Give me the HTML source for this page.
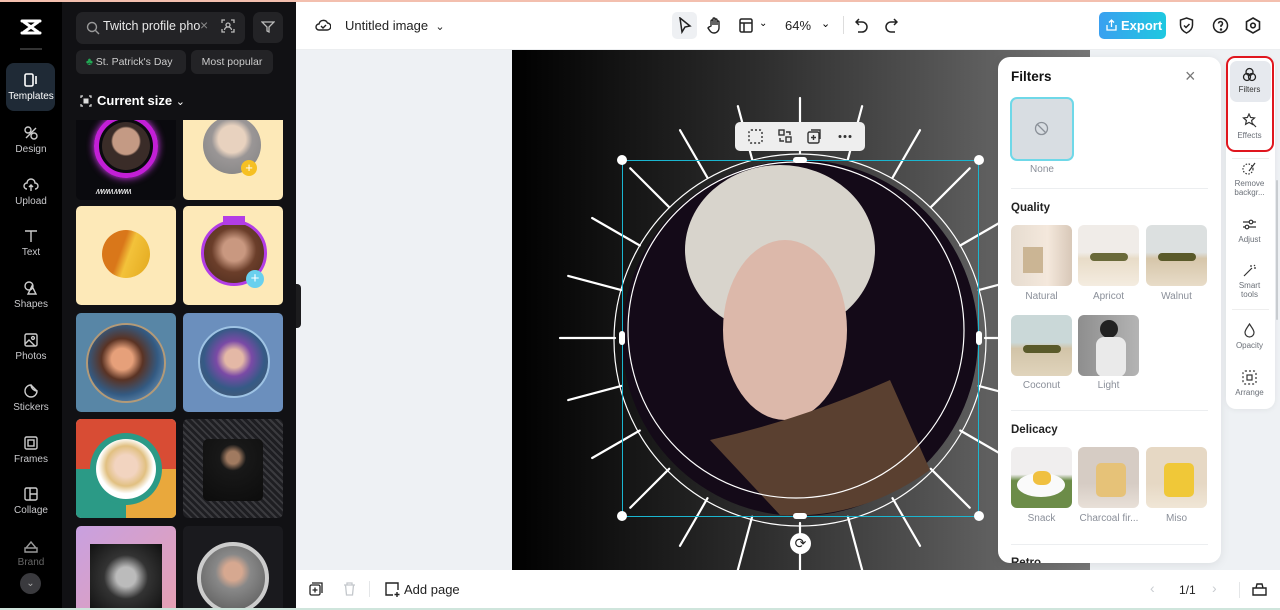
<!DOCTYPE html>
<html><head><meta charset="utf-8"><style>
*{box-sizing:border-box;margin:0;padding:0}
html,body{width:1280px;height:610px;overflow:hidden}
body{font-family:"Liberation Sans",sans-serif;background:#eef1f4;position:relative}
.abs{position:absolute}
.nav{left:0;top:2px;width:62px;height:608px;background:#000}
.nav .it{position:absolute;left:6px;width:50px;text-align:center;color:#c9c9cc;font-size:10px}
.nav .it svg{display:block;margin:0 auto 3px}
.panel{left:62px;top:2px;width:234px;height:608px;background:#111114;overflow:hidden}
.card{position:absolute;width:100px;height:99px;border-radius:5px;overflow:hidden}
.lbl{font-size:10px;color:#8a8f99;text-align:center}
.th{position:absolute;width:61px;height:61px;border-radius:6px;overflow:hidden}
.rt{position:absolute;left:0;width:47px;text-align:center;font-size:8px;color:#6b7078;line-height:9px}
.rt svg{display:block;margin:0 auto 3px}
</style></head><body>
<div class="abs" style="left:0;top:0;width:1280px;height:2px;background:#f3bfae"></div>
<!-- nav -->
<div class="abs nav">
 <svg class="abs" style="left:19px;top:16px" width="24" height="18" viewBox="0 0 24 18"><path d="M3 3h18M3 15h18M5 4l14 10M19 4L5 14" stroke="#fff" stroke-width="3" fill="none" stroke-linecap="round"/></svg>
 <div class="abs" style="left:20px;top:46px;width:22px;height:2px;background:#333"></div>
 <div class="abs" style="left:6px;top:61px;width:49px;height:48px;border-radius:8px;background:#1f2a36"></div>
 <div class="it" style="top:70px;color:#fff"><svg width="16" height="16" viewBox="0 0 16 16" fill="none" stroke="#fff" stroke-width="1.6"><rect x="2" y="2" width="8" height="12" rx="1.5"/><path d="M13 4v8"/></svg>Templates</div>
 <div class="it" style="top:123px"><svg width="16" height="16" viewBox="0 0 16 16" fill="none" stroke="#ccc" stroke-width="1.4"><circle cx="5" cy="5" r="3"/><circle cx="11" cy="11" r="3"/><path d="M3 13L13 3"/></svg>Design</div>
 <div class="it" style="top:175px"><svg width="16" height="16" viewBox="0 0 16 16" fill="none" stroke="#ccc" stroke-width="1.4"><path d="M4 12a3 3 0 0 1 0-6 4 4 0 0 1 8 0 3 3 0 0 1 0 6M8 8v6M6 10l2-2 2 2"/></svg>Upload</div>
 <div class="it" style="top:226px"><svg width="16" height="16" viewBox="0 0 16 16" fill="none" stroke="#ccc" stroke-width="1.4"><path d="M2 3h12M8 3v11"/></svg>Text</div>
 <div class="it" style="top:278px"><svg width="16" height="16" viewBox="0 0 16 16" fill="none" stroke="#ccc" stroke-width="1.4"><circle cx="6" cy="6" r="4"/><path d="M9 6l4 8H5z"/></svg>Shapes</div>
 <div class="it" style="top:330px"><svg width="16" height="16" viewBox="0 0 16 16" fill="none" stroke="#ccc" stroke-width="1.4"><rect x="2" y="2" width="12" height="12" rx="1.5"/><path d="M2 12l4-4 6 6"/><circle cx="10" cy="6" r="1.4"/></svg>Photos</div>
 <div class="it" style="top:381px"><svg width="16" height="16" viewBox="0 0 16 16" fill="none" stroke="#ccc" stroke-width="1.4"><path d="M14 8A6 6 0 1 1 8 2c0 3 3 6 6 6zM8 2l6 6"/></svg>Stickers</div>
 <div class="it" style="top:433px"><svg width="16" height="16" viewBox="0 0 16 16" fill="none" stroke="#ccc" stroke-width="1.4"><rect x="2" y="2" width="12" height="12" rx="1.5"/><rect x="5" y="5" width="6" height="6"/></svg>Frames</div>
 <div class="it" style="top:484px"><svg width="16" height="16" viewBox="0 0 16 16" fill="none" stroke="#ccc" stroke-width="1.4"><rect x="2" y="2" width="12" height="12" rx="1.5"/><path d="M7 2v12M7 8h7"/></svg>Collage</div>
 <div class="it" style="top:536px;color:#666"><svg width="16" height="16" viewBox="0 0 16 16" fill="none" stroke="#999" stroke-width="1.4"><path d="M2 10h12v4H2zM3 10l5-6 5 6"/></svg>Brand</div>
 <div class="abs" style="left:20px;top:571px;width:21px;height:21px;border-radius:50%;background:#3a3a3e;color:#aaa;font-size:10px;text-align:center;line-height:21px">⌄</div>
</div>
<!-- panel -->
<div class="abs panel">
 <div class="abs" style="left:14px;top:10px;width:169px;height:32px;border-radius:7px;background:#232326"></div>
 <svg class="abs" style="left:24px;top:19px" width="14" height="14" viewBox="0 0 14 14" fill="none" stroke="#999" stroke-width="1.4"><circle cx="6" cy="6" r="4.5"/><path d="M9.5 9.5L13 13"/></svg>
 <div class="abs" style="left:41px;top:17px;color:#e8e8e8;font-size:12.5px">Twitch profile pho</div>
 <div class="abs" style="left:138px;top:15px;color:#888;font-size:14px">×</div>
 <svg class="abs" style="left:159px;top:17px" width="14" height="14" viewBox="0 0 14 14" fill="none" stroke="#bbb" stroke-width="1.3"><path d="M1 4V1h3M10 1h3v3M13 10v3h-3M4 13H1v-3"/><circle cx="7" cy="6" r="2"/><path d="M3.5 11a3.5 3 0 0 1 7 0"/></svg>
 <div class="abs" style="left:191px;top:10px;width:30px;height:31px;border-radius:7px;background:#232326"></div>
 <svg class="abs" style="left:199px;top:18px" width="14" height="14" viewBox="0 0 14 14" fill="none" stroke="#bbb" stroke-width="1.3"><path d="M1 2h12L8 7v5l-2-1V7z"/></svg>
 <div class="abs" style="left:14px;top:48px;width:110px;height:24px;border-radius:6px;background:#232326;color:#ccc;font-size:10.5px;line-height:24px;padding-left:10px"><span style="color:#22a854">♣</span> St. Patrick's Day</div>
 <div class="abs" style="left:129px;top:48px;width:82px;height:24px;border-radius:6px;background:#232326;color:#ccc;font-size:10.5px;line-height:24px;text-align:center">Most popular</div>
 <svg class="abs" style="left:18px;top:93px" width="12" height="12" viewBox="0 0 12 12" fill="none" stroke="#ddd" stroke-width="1.2"><path d="M1 3V1h2M9 1h2v2M11 9v2H9M3 11H1V9"/><rect x="3.5" y="3.5" width="5" height="5" fill="#ddd" stroke="none"/></svg>
 <div class="abs" style="left:35px;top:91px;color:#fff;font-size:13px;font-weight:bold">Current size <span style="font-weight:normal;font-size:11px">⌄</span></div>
 <div class="card" style="left:14px;top:118px;height:80px;background:#0a0a0e;border-radius:0 0 5px 5px">
  <div class="abs" style="left:18px;top:-6px;width:64px;height:64px;border-radius:50%;border:5px solid #c21fd6;box-shadow:0 0 8px #e040ff"></div>
  <div class="abs" style="left:26px;top:2px;width:48px;height:48px;border-radius:50%;background:radial-gradient(circle at 50% 40%,#c49a84 0 35%,#3a2c28 40%)"></div>
  <div class="abs" style="left:20px;top:66px;color:#fff;font-size:9px;font-style:italic;letter-spacing:-1px">ʍʍʍ ʍʍʍ</div>
 </div>
 <div class="card" style="left:121px;top:118px;height:80px;background:#fde9b8;border-radius:0 0 5px 5px">
  <div class="abs" style="left:20px;top:-4px;width:58px;height:58px;border-radius:50%;background:radial-gradient(circle at 50% 40%,#e8d2bf 0 30%,#9a9696 45%,#808080)"></div>
  <div class="abs" style="left:58px;top:40px;width:16px;height:16px;border-radius:50%;background:#f6c023;color:#fff;font-size:13px;line-height:15px;text-align:center">+</div>
 </div>
 <div class="card" style="left:14px;top:204px;background:#fde9b8">
  <div class="abs" style="left:26px;top:24px;width:48px;height:48px;border-radius:50%;background:linear-gradient(110deg,#d9771a 0 40%,#f3c23a 55%,#e2a81d)"></div>
 </div>
 <div class="card" style="left:121px;top:204px;background:#fde9b8">
  <div class="abs" style="left:18px;top:14px;width:66px;height:66px;border-radius:50%;border:3px solid #b33de6;background:radial-gradient(circle at 50% 45%,#c99880 0 25%,#6b3e2a 50%,#4a2a1c)"></div>
  <div class="abs" style="left:40px;top:10px;width:22px;height:9px;background:#b33de6"></div>
  <div class="abs" style="left:63px;top:64px;width:18px;height:18px;border-radius:50%;background:#69d0ee;color:#fff;font-size:15px;line-height:17px;text-align:center">+</div>
 </div>
 <div class="card" style="left:14px;top:311px;background:#5886a6">
  <div class="abs" style="left:10px;top:10px;width:80px;height:80px;border-radius:50%;border:2px solid #b39a78;background:radial-gradient(circle at 45% 45%,#e6a07a 0 18%,#5a3324 35%,#335a82 60%,#8cb6d8)"></div>
 </div>
 <div class="card" style="left:121px;top:311px;background:#6b8fbd">
  <div class="abs" style="left:15px;top:13px;width:72px;height:72px;border-radius:50%;border:2px solid #9ec3e4;background:radial-gradient(circle at 50% 45%,#e4b8a6 0 18%,#7a4aa6 35%,#355a86 60%,#505a66)"></div>
 </div>
 <div class="card" style="left:14px;top:417px;background:#f2e2c4">
  <div class="abs" style="left:0;top:0;width:100px;height:100px;background:conic-gradient(#d84c34 0 25%,#e9a83c 0 50%,#2b9a86 0 75%,#d84c34 0)"></div>
  <div class="abs" style="left:14px;top:14px;width:72px;height:72px;border-radius:50%;background:#2b9a86"></div>
  <div class="abs" style="left:20px;top:20px;width:60px;height:60px;border-radius:50%;background:radial-gradient(circle at 50% 45%,#f2d4c0 0 25%,#e1c081 45%,#fff 62%)"></div>
 </div>
 <div class="card" style="left:121px;top:417px;background:repeating-linear-gradient(45deg,#3a3a3e 0 2px,#1e1e22 2px 5px)">
  <div class="abs" style="left:20px;top:20px;width:60px;height:62px;border-radius:5px;background:radial-gradient(circle at 50% 30%,#a07a60 0 12%,#181818 25%,#0c0c0c)"></div>
 </div>
 <div class="card" style="left:14px;top:524px;background:linear-gradient(135deg,#c8a0e0,#e8a0b0)">
  <div class="abs" style="left:14px;top:18px;width:72px;height:66px;background:radial-gradient(circle at 50% 50%,#bbb 0 20%,#333 45%,#111)"></div>
 </div>
 <div class="card" style="left:121px;top:524px;background:#1a1a1e">
  <div class="abs" style="left:14px;top:16px;width:72px;height:72px;border-radius:50%;border:4px solid #ccc;background:radial-gradient(circle at 50% 40%,#d6a890 0 18%,#888 35%,#555)"></div>
 </div>
</div>
<div class="abs" style="left:296px;top:284px;width:5px;height:44px;background:#1c1c1e;border-radius:0 4px 4px 0"></div>
<!-- top bar -->
<div class="abs" style="left:296px;top:2px;width:984px;height:48px;background:#fff;border-bottom:1px solid #eceef0"></div>
<svg class="abs" style="left:315px;top:18px" width="16" height="14" viewBox="0 0 16 14" fill="none" stroke="#222" stroke-width="1.4"><path d="M4 12a3 3 0 0 1 0-6 4.5 4.5 0 0 1 8.5-1A3.5 3.5 0 0 1 12 12z"/><path d="M6 8l2 2 3-3"/></svg>
<div class="abs" style="left:345px;top:18px;font-size:13px;color:#222">Untitled image &nbsp;<span style="font-size:11px">⌄</span></div>
<div class="abs" style="left:672px;top:12px;width:25px;height:27px;border-radius:5px;background:#eef0f3"></div>
<svg class="abs" style="left:678px;top:17px" width="14" height="17" viewBox="0 0 14 17" fill="none" stroke="#222" stroke-width="1.5"><path d="M2 1l10 8-5 1-3 5z"/></svg>
<svg class="abs" style="left:707px;top:17px" width="16" height="17" viewBox="0 0 16 17" fill="none" stroke="#222" stroke-width="1.4"><path d="M4 9V4a1 1 0 0 1 2 0v4V2a1 1 0 0 1 2 0v6V3a1 1 0 0 1 2 0v5V5a1 1 0 0 1 2 0v6a5 5 0 0 1-5 5c-3 0-4-2-6-5l1-1z"/></svg>
<svg class="abs" style="left:739px;top:18px" width="14" height="15" viewBox="0 0 14 15" fill="none" stroke="#222" stroke-width="1.5"><rect x="1" y="1" width="12" height="13" rx="1.5"/><path d="M1 5h12M5 5v9"/></svg>
<div class="abs" style="left:759px;top:18px;font-size:10px">⌄</div>
<div class="abs" style="left:785px;top:18px;font-size:13px;color:#222">64%</div>
<div class="abs" style="left:821px;top:17px;font-size:11px">⌄</div>
<div class="abs" style="left:843px;top:16px;width:1px;height:18px;background:#ddd"></div>
<svg class="abs" style="left:855px;top:18px" width="13" height="15" viewBox="0 0 13 15" fill="none" stroke="#222" stroke-width="1.5"><path d="M4 1L1 4l3 3M1 4h6a5 5 0 0 1 0 10H3"/></svg>
<svg class="abs" style="left:885px;top:18px" width="13" height="15" viewBox="0 0 13 15" fill="none" stroke="#222" stroke-width="1.5"><path d="M9 1l3 3-3 3M12 4H6a5 5 0 0 0 0 10h4"/></svg>
<div class="abs" style="left:1099px;top:12px;width:67px;height:27px;border-radius:5px;background:linear-gradient(90deg,#3aa0f0,#1ec8e0);color:#fff;font-size:13px;font-weight:bold;line-height:27px;padding-left:22px">Export</div>
<svg class="abs" style="left:1106px;top:19px" width="11" height="12" viewBox="0 0 11 12" fill="none" stroke="#fff" stroke-width="1.3"><path d="M5.5 1v7M3 3.5l2.5-2.5 2.5 2.5M1 6v5h9V6"/></svg>
<svg class="abs" style="left:1179px;top:17px" width="15" height="17" viewBox="0 0 15 17" fill="none" stroke="#222" stroke-width="1.5"><path d="M7.5 1l6 2v5c0 4-3 6.5-6 8-3-1.5-6-4-6-8V3z"/><path d="M5 8.5l2 2 3.5-3.5"/></svg>
<svg class="abs" style="left:1212px;top:17px" width="17" height="17" viewBox="0 0 17 17" fill="none" stroke="#222" stroke-width="1.5"><circle cx="8.5" cy="8.5" r="7"/><path d="M6.5 6.5a2 2 0 1 1 2.5 2v1.5"/><circle cx="9" cy="12.5" r=".5" fill="#222"/></svg>
<svg class="abs" style="left:1245px;top:17px" width="16" height="17" viewBox="0 0 16 17" fill="none" stroke="#222" stroke-width="1.6"><path d="M8 1l6.5 3.75v7.5L8 16 1.5 12.25v-7.5z"/><circle cx="8" cy="8.5" r="2.3"/></svg>
<!-- canvas -->
<div class="abs" style="left:512px;top:50px;width:578px;height:520px;background:linear-gradient(90deg,#000 0%,#2a2a2a 40%,#555 75%,#777);overflow:hidden">
<svg width="578" height="520" viewBox="512 50 578 520">
 <g stroke="#fff" stroke-width="2.2" stroke-linecap="round">
  <g transform="translate(800,338)">
   <line x1="0" y1="-185" x2="0" y2="-240" transform="rotate(0)"/><line x1="0" y1="-185" x2="0" y2="-240" transform="rotate(15)"/><line x1="0" y1="-185" x2="0" y2="-240" transform="rotate(30)"/><line x1="0" y1="-185" x2="0" y2="-240" transform="rotate(45)"/><line x1="0" y1="-185" x2="0" y2="-240" transform="rotate(60)"/><line x1="0" y1="-185" x2="0" y2="-240" transform="rotate(75)"/><line x1="0" y1="-185" x2="0" y2="-240" transform="rotate(90)"/><line x1="0" y1="-185" x2="0" y2="-240" transform="rotate(105)"/><line x1="0" y1="-185" x2="0" y2="-240" transform="rotate(120)"/><line x1="0" y1="-185" x2="0" y2="-240" transform="rotate(135)"/><line x1="0" y1="-185" x2="0" y2="-240" transform="rotate(150)"/><line x1="0" y1="-185" x2="0" y2="-240" transform="rotate(165)"/><line x1="0" y1="-185" x2="0" y2="-240" transform="rotate(180)"/><line x1="0" y1="-185" x2="0" y2="-240" transform="rotate(195)"/><line x1="0" y1="-185" x2="0" y2="-240" transform="rotate(210)"/><line x1="0" y1="-185" x2="0" y2="-240" transform="rotate(225)"/><line x1="0" y1="-185" x2="0" y2="-240" transform="rotate(240)"/><line x1="0" y1="-185" x2="0" y2="-240" transform="rotate(255)"/><line x1="0" y1="-185" x2="0" y2="-240" transform="rotate(270)"/><line x1="0" y1="-185" x2="0" y2="-240" transform="rotate(285)"/><line x1="0" y1="-185" x2="0" y2="-240" transform="rotate(300)"/><line x1="0" y1="-185" x2="0" y2="-240" transform="rotate(315)"/><line x1="0" y1="-185" x2="0" y2="-240" transform="rotate(330)"/><line x1="0" y1="-185" x2="0" y2="-240" transform="rotate(345)"/>
  </g>
 </g>
 <circle cx="800" cy="338" r="178" fill="#140a18"/>
 <ellipse cx="780" cy="250" rx="95" ry="85" fill="#d8d4cc"/>
 <ellipse cx="785" cy="330" rx="62" ry="90" fill="#dcb8aa"/>
 <path d="M710 440 Q800 420 890 380 L930 470 Q860 520 780 515z" fill="#5a4030"/>
 <circle cx="796" cy="330" r="168" fill="none" stroke="#fff" stroke-width="1.2"/>
 <circle cx="800" cy="340" r="186" fill="none" stroke="#fff" stroke-width="1.2"/>
</svg>
</div>
<!-- selection -->
<div class="abs" style="left:622px;top:160px;width:357px;height:357px;border:1.5px solid #1ab6d0"></div>
<div class="abs" style="left:617px;top:155px;width:10px;height:10px;border-radius:50%;background:#fff"></div>
<div class="abs" style="left:974px;top:155px;width:10px;height:10px;border-radius:50%;background:#fff"></div>
<div class="abs" style="left:617px;top:511px;width:10px;height:10px;border-radius:50%;background:#fff"></div>
<div class="abs" style="left:974px;top:511px;width:10px;height:10px;border-radius:50%;background:#fff"></div>
<div class="abs" style="left:793px;top:157px;width:14px;height:6px;border-radius:3px;background:#fff"></div>
<div class="abs" style="left:793px;top:513px;width:14px;height:6px;border-radius:3px;background:#fff"></div>
<div class="abs" style="left:619px;top:331px;width:6px;height:14px;border-radius:3px;background:#fff"></div>
<div class="abs" style="left:976px;top:331px;width:6px;height:14px;border-radius:3px;background:#fff"></div>
<div class="abs" style="left:790px;top:533px;width:21px;height:21px;border-radius:50%;background:#fff;color:#222;font-size:14px;line-height:21px;text-align:center">⟳</div>
<div class="abs" style="left:735px;top:122px;width:130px;height:29px;border-radius:5px;background:#eeeeee"></div>
<svg class="abs" style="left:748px;top:129px" width="110" height="15" viewBox="0 0 110 15" fill="none" stroke="#333" stroke-width="1.4"><rect x="1" y="1" width="13" height="13" rx="2" stroke-dasharray="2 2"/><rect x="31" y="1" width="5" height="5"/><rect x="38" y="8" width="5" height="5"/><path d="M38 3h4v3M36 12h-4V9"/><rect x="60" y="3" width="11" height="11" rx="1.5"/><path d="M63 1h9v9M65.5 6v5M63 8.5h5"/><circle cx="92" cy="7.5" r=".8" fill="#333"/><circle cx="97" cy="7.5" r=".8" fill="#333"/><circle cx="102" cy="7.5" r=".8" fill="#333"/></svg>
<!-- filters panel -->
<div class="abs" style="left:998px;top:57px;width:223px;height:506px;border-radius:12px;background:#fff;box-shadow:0 2px 10px rgba(0,0,0,.08);overflow:hidden">
 <div class="abs" style="left:13px;top:12px;font-size:13.5px;font-weight:bold;color:#111">Filters</div>
 <div class="abs" style="left:187px;top:9px;font-size:18px;color:#777">×</div>
 <div class="abs" style="left:12px;top:40px;width:64px;height:64px;border-radius:7px;border:2px solid #6fd8e8;background:#d8dde2"></div>
 <svg class="abs" style="left:36px;top:64px" width="15" height="15" viewBox="0 0 15 15" fill="none" stroke="#8a9098" stroke-width="1.3"><circle cx="7.5" cy="7.5" r="6"/><path d="M3.5 3.5l8 8"/></svg>
 <div class="abs lbl" style="left:12px;top:107px;width:64px">None</div>
 <div class="abs" style="left:13px;top:131px;width:197px;height:1px;background:#eceef0"></div>
 <div class="abs" style="left:13px;top:145px;font-size:11.5px;color:#222;font-weight:bold">Quality</div>
 <div class="th" style="left:13px;top:168px;background:linear-gradient(90deg,#e6dcd0,#f4e8dc 60%,#d8c8b8)"><div class="abs" style="left:12px;top:22px;width:20px;height:26px;background:#cbb594"></div></div>
 <div class="th" style="left:80px;top:168px;background:linear-gradient(#f0ece8 45%,#e8dcc8 55%,#f4ece0)"><div class="abs" style="left:12px;top:28px;width:38px;height:8px;background:#6a6a3a;border-radius:4px"></div></div>
 <div class="th" style="left:148px;top:168px;background:linear-gradient(#dce0e0 45%,#d6c6aa 55%,#e8dcc8)"><div class="abs" style="left:12px;top:28px;width:38px;height:8px;background:#5a5a2a;border-radius:4px"></div></div>
 <div class="abs lbl" style="left:13px;top:234px;width:61px">Natural</div>
 <div class="abs lbl" style="left:80px;top:234px;width:61px">Apricot</div>
 <div class="abs lbl" style="left:148px;top:234px;width:61px">Walnut</div>
 <div class="th" style="left:13px;top:258px;background:linear-gradient(#cad8d8 45%,#d2c4a8 55%,#e0d4bc)"><div class="abs" style="left:12px;top:30px;width:38px;height:8px;background:#5a5a2a;border-radius:4px"></div></div>
 <div class="th" style="left:80px;top:258px;background:linear-gradient(90deg,#8e8e8e,#b4b4b4)"><div class="abs" style="left:22px;top:5px;width:18px;height:18px;border-radius:50%;background:#222"></div><div class="abs" style="left:18px;top:22px;width:30px;height:40px;border-radius:8px;background:#eaeaea"></div></div>
 <div class="abs lbl" style="left:13px;top:323px;width:61px">Coconut</div>
 <div class="abs lbl" style="left:80px;top:323px;width:61px">Light</div>
 <div class="abs" style="left:13px;top:353px;width:197px;height:1px;background:#eceef0"></div>
 <div class="abs" style="left:13px;top:367px;font-size:11.5px;color:#222;font-weight:bold">Delicacy</div>
 <div class="th" style="left:13px;top:390px;background:linear-gradient(#f0eeee 45%,#6c8c48 55%)"><div class="abs" style="left:6px;top:26px;width:48px;height:24px;border-radius:50%;background:#fafafa"></div><div class="abs" style="left:22px;top:24px;width:18px;height:14px;border-radius:40%;background:#f0c040"></div></div>
 <div class="th" style="left:80px;top:390px;background:linear-gradient(#d6ccc4 60%,#e8e0d8)"><div class="abs" style="left:18px;top:16px;width:30px;height:34px;border-radius:5px;background:#e6c278"></div></div>
 <div class="th" style="left:148px;top:390px;background:linear-gradient(#e6d8c4 60%,#f0e6d6)"><div class="abs" style="left:18px;top:16px;width:30px;height:34px;border-radius:5px;background:#f0c838"></div></div>
 <div class="abs lbl" style="left:13px;top:456px;width:61px">Snack</div>
 <div class="abs lbl" style="left:78px;top:456px;width:66px;white-space:nowrap">Charcoal fir...</div>
 <div class="abs lbl" style="left:148px;top:456px;width:61px">Miso</div>
 <div class="abs" style="left:13px;top:487px;width:197px;height:1px;background:#eceef0"></div>
 <div class="abs" style="left:13px;top:500px;font-size:11.5px;color:#222;font-weight:bold">Retro</div>
</div>
<!-- right toolbar -->
<div class="abs" style="left:1226px;top:57px;width:49px;height:352px;border-radius:10px;background:#fff;box-shadow:0 1px 6px rgba(0,0,0,.06)">
 <div class="abs" style="left:4px;top:4px;width:41px;height:41px;border-radius:7px;background:#e6e9ee"></div>
 <div class="rt" style="top:10px;color:#333"><svg width="15" height="15" viewBox="0 0 15 15" fill="none" stroke="#222" stroke-width="1.3"><circle cx="7.5" cy="5" r="3.5"/><circle cx="5" cy="10" r="3.5"/><circle cx="10" cy="10" r="3.5"/></svg>Filters</div>
 <div class="rt" style="top:56px"><svg width="15" height="15" viewBox="0 0 15 15" fill="none" stroke="#333" stroke-width="1.2"><path d="M7 1l1.6 3.5 3.9.4-2.9 2.6.8 3.8L7 9.4 3.6 11.3l.8-3.8L1.5 4.9l3.9-.4zM10 10l4 4"/></svg>Effects</div>
 <div class="abs" style="left:6px;top:101px;width:37px;height:1px;background:#eee"></div>
 <div class="rt" style="top:104px"><svg width="15" height="15" viewBox="0 0 15 15" fill="none" stroke="#333" stroke-width="1.2"><circle cx="6" cy="8" r="5" stroke-dasharray="1.5 1.5"/><path d="M13 2L7 10"/></svg>Remove<br>backgr...</div>
 <div class="rt" style="top:160px"><svg width="15" height="15" viewBox="0 0 15 15" fill="none" stroke="#333" stroke-width="1.2"><path d="M1 5h13M1 10h13"/><circle cx="9" cy="5" r="1.8" fill="#fff"/><circle cx="5" cy="10" r="1.8" fill="#fff"/></svg>Adjust</div>
 <div class="rt" style="top:206px"><svg width="15" height="15" viewBox="0 0 15 15" fill="none" stroke="#333" stroke-width="1.2"><path d="M2 13L10 5M9 2v2M12 5h2M12 2l1 1"/></svg>Smart<br>tools</div>
 <div class="abs" style="left:6px;top:252px;width:37px;height:1px;background:#eee"></div>
 <div class="rt" style="top:266px"><svg width="15" height="15" viewBox="0 0 15 15" fill="none" stroke="#333" stroke-width="1.2"><path d="M7.5 1C5 5 3 7 3 9.5a4.5 4.5 0 0 0 9 0C12 7 10 5 7.5 1z"/></svg>Opacity</div>
 <div class="rt" style="top:313px"><svg width="15" height="15" viewBox="0 0 15 15" fill="none" stroke="#333" stroke-width="1.2"><rect x="1" y="1" width="13" height="13" rx="2" stroke-dasharray="2 2"/><rect x="5" y="5" width="5" height="5"/></svg>Arrange</div>
</div>
<div class="abs" style="left:1226px;top:56px;width:48px;height:96px;border:2px solid #e0161e;border-radius:9px"></div>
<div class="abs" style="left:1276px;top:180px;width:2px;height:140px;background:#c8ccd0;border-radius:1px"></div>
<!-- bottom bar -->
<div class="abs" style="left:296px;top:570px;width:984px;height:40px;background:#fff"></div>
<div class="abs" style="left:0;top:608px;width:1280px;height:2px;background:#cfe5dc"></div>
<svg class="abs" style="left:309px;top:582px" width="14" height="14" viewBox="0 0 14 14" fill="none" stroke="#222" stroke-width="1.3"><rect x="1" y="3" width="10" height="10" rx="1.5"/><path d="M3 1h10v10M6 5.5v5M3.5 8h5"/></svg>
<svg class="abs" style="left:343px;top:582px" width="13" height="14" viewBox="0 0 13 14" fill="none" stroke="#c4c8cc" stroke-width="1.3"><path d="M1 3h11M4 3V1h5v2M2.5 3l1 10h6l1-10"/></svg>
<div class="abs" style="left:369px;top:581px;width:1px;height:16px;background:#e4e6e8"></div>
<svg class="abs" style="left:384px;top:581px" width="16" height="16" viewBox="0 0 16 16" fill="none" stroke="#222" stroke-width="1.4"><path d="M9 14H2V2h12v7"/><path d="M13 11v5M10.5 13.5h5"/></svg>
<div class="abs" style="left:404px;top:582px;font-size:13px;color:#222">Add page</div>
<div class="abs" style="left:1150px;top:580px;font-size:14px;color:#c8ccd0">‹</div>
<div class="abs" style="left:1179px;top:583px;font-size:12px;color:#222">1/1</div>
<div class="abs" style="left:1212px;top:580px;font-size:14px;color:#c8ccd0">›</div>
<div class="abs" style="left:1239px;top:582px;width:1px;height:16px;background:#e4e6e8"></div>
<svg class="abs" style="left:1252px;top:582px" width="15" height="14" viewBox="0 0 15 14" fill="none" stroke="#222" stroke-width="1.4"><path d="M1 6h13v7H1zM4 6l1-4h5l1 4"/></svg>
</body></html>
